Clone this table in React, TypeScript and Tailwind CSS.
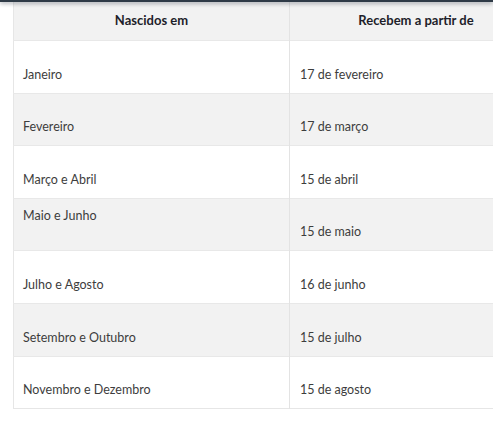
import React from "react";

const rows: { born: string; from: string; top?: boolean }[] = [
  { born: "Janeiro", from: "17 de fevereiro" },
  { born: "Fevereiro", from: "17 de março" },
  { born: "Março e Abril", from: "15 de abril" },
  { born: "Maio e Junho", from: "15 de maio", top: true },
  { born: "Julho e Agosto", from: "16 de junho" },
  { born: "Setembro e Outubro", from: "15 de julho" },
  { born: "Novembro e Dezembro", from: "15 de agosto" },
];

export default function App() {
  return (
    <div className="relative h-[430px] w-[493px] overflow-hidden bg-white font-['Lato',sans-serif] text-[#3d3d3d]">
      {/* header shadow from the sticky bar above */}
      <div className="absolute left-0 right-0 top-0 h-[2px] bg-[#2f3b47] shadow-[0_1px_4px_rgba(30,40,55,0.6)]" />

      <div className="pl-[13px]">
        <table className="w-[530px] border-collapse border border-[#e6e6e6] text-[12.5px]">
          <thead>
            <tr className="h-[40px] bg-[#f2f2f2]">
              <th className="w-[276px] border-r border-[#e3e3e3] text-center text-[13px] font-bold text-[#1e1e2a]">
                Nascidos em
              </th>
              <th className="text-center text-[13px] font-bold text-[#1e1e2a]">
                <span className="inline-block w-[250px]">Recebem a partir de</span>
              </th>
            </tr>
          </thead>
          <tbody>
            {rows.map((r, i) => (
              <tr
                key={r.born}
                className={`h-[52.6px] border-t border-[#e8e8e8] ${i % 2 === 1 ? "bg-[#f2f2f2]" : "bg-white"}`}
              >
                <td
                  className={`border-r border-[#e3e3e3] px-[9px] ${r.top ? "pt-[7px] align-top" : "pb-[8px] align-bottom"}`}
                >
                  <div className="leading-5">{r.born}</div>
                </td>
                <td className="px-[10px] pb-[8px] align-bottom">
                  <div className="leading-5">{r.from}</div>
                </td>
              </tr>
            ))}
          </tbody>
        </table>
      </div>
    </div>
  );
}
